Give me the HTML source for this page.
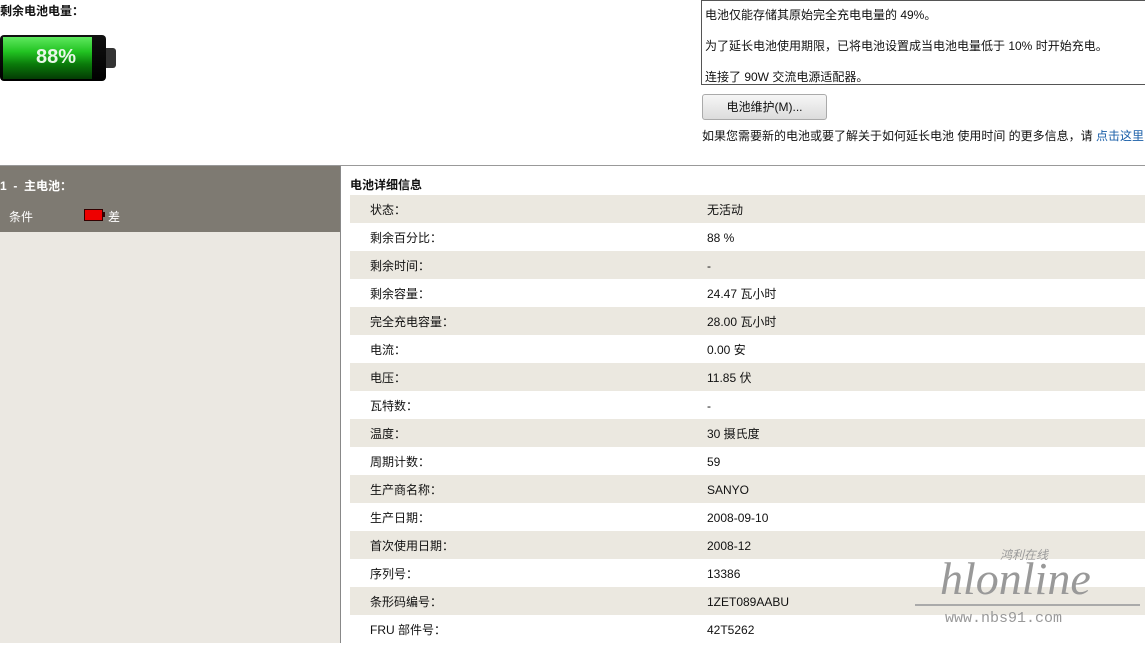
<!DOCTYPE html><html><head><meta charset="utf-8"><style>
body{margin:0;width:1145px;height:643px;overflow:hidden;background:#fff;font-family:"Liberation Sans","Noto Sans CJK SC",sans-serif;font-size:12px;color:#111;position:relative}
.a{position:absolute;white-space:nowrap}
.row{position:absolute;left:350px;width:795px;height:28px;line-height:30px}
.row span{position:absolute}
.s{background:#ebe8e0}
</style></head><body>
<div class="a" style="left:0;top:2px;font-weight:bold">剩余电池电量：</div>
<div class="a" style="left:0;top:35px;width:106px;height:46px;border-radius:4px;background:linear-gradient(#111,#000);"></div>
<div class="a" style="left:3px;top:37px;width:89px;height:42px;background:linear-gradient(#5fe85f 0%,#22c322 35%,#0a7a0a 65%,#043c04 100%)"></div>
<div class="a" style="left:106px;top:48px;width:10px;height:20px;background:#333;border-radius:0 3px 3px 0"></div>
<div class="a" style="left:36px;top:46px;font-size:20px;font-weight:bold;color:#e8f7e8">88%</div>
<div class="a" style="left:701px;top:0;width:444px;height:85px;border:1px solid #555;border-right:none;box-sizing:border-box"></div>
<div class="a" style="left:705px;top:6px">电池仅能存储其原始完全充电电量的 49%。</div>
<div class="a" style="left:705px;top:37px">为了延长电池使用期限，已将电池设置成当电池电量低于 10% 时开始充电。</div>
<div class="a" style="left:705px;top:68px">连接了 90W 交流电源适配器。</div>
<div class="a" style="left:702px;top:94px;width:123px;height:24px;border:1px solid #aaa;border-radius:3px;background:linear-gradient(#f6f6f6,#dcdcdc);text-align:center;line-height:24px">电池维护(M)...</div>
<div class="a" style="left:702px;top:127px">如果您需要新的电池或要了解关于如何延长电池 使用时间 的更多信息，请 <span style="color:#1a5fa8">点击这里</span></div>
<div class="a" style="left:0;top:165px;width:1145px;height:1px;background:#999"></div>
<div class="a" style="left:0;top:166px;width:340px;height:66px;background:#7e7a72"></div>
<div class="a" style="left:0;top:232px;width:340px;height:411px;background:#ebe8e2"></div>
<div class="a" style="left:340px;top:166px;width:1px;height:477px;background:#888"></div>
<div class="a" style="left:0;top:177px;color:#fff;font-weight:bold">1 &nbsp;- &nbsp;主电池：</div>
<div class="a" style="left:9px;top:208px;color:#fff">条件</div>
<div class="a" style="left:84px;top:209px;width:17px;height:10px;background:#e00;border:1px solid #300"></div>
<div class="a" style="left:103px;top:212px;width:2px;height:5px;background:#300"></div>
<div class="a" style="left:108px;top:208px;color:#fff">差</div>
<div class="a" style="left:350px;top:176px;font-weight:bold">电池详细信息</div>
<div class="row s" style="top:195px"><span style="left:20px">状态：</span><span style="left:357px">无活动</span></div>
<div class="row" style="top:223px"><span style="left:20px">剩余百分比：</span><span style="left:357px">88 %</span></div>
<div class="row s" style="top:251px"><span style="left:20px">剩余时间：</span><span style="left:357px">-</span></div>
<div class="row" style="top:279px"><span style="left:20px">剩余容量：</span><span style="left:357px">24.47 瓦小时</span></div>
<div class="row s" style="top:307px"><span style="left:20px">完全充电容量：</span><span style="left:357px">28.00 瓦小时</span></div>
<div class="row" style="top:335px"><span style="left:20px">电流：</span><span style="left:357px">0.00 安</span></div>
<div class="row s" style="top:363px"><span style="left:20px">电压：</span><span style="left:357px">11.85 伏</span></div>
<div class="row" style="top:391px"><span style="left:20px">瓦特数：</span><span style="left:357px">-</span></div>
<div class="row s" style="top:419px"><span style="left:20px">温度：</span><span style="left:357px">30 摄氏度</span></div>
<div class="row" style="top:447px"><span style="left:20px">周期计数：</span><span style="left:357px">59</span></div>
<div class="row s" style="top:475px"><span style="left:20px">生产商名称：</span><span style="left:357px">SANYO</span></div>
<div class="row" style="top:503px"><span style="left:20px">生产日期：</span><span style="left:357px">2008-09-10</span></div>
<div class="row s" style="top:531px"><span style="left:20px">首次使用日期：</span><span style="left:357px">2008-12</span></div>
<div class="row" style="top:559px"><span style="left:20px">序列号：</span><span style="left:357px">13386</span></div>
<div class="row s" style="top:587px"><span style="left:20px">条形码编号：</span><span style="left:357px">1ZET089AABU</span></div>
<div class="row" style="top:615px"><span style="left:20px">FRU 部件号：</span><span style="left:357px">42T5262</span></div>
<div class="a" style="left:940px;top:552px;font-family:'Liberation Serif',serif;font-style:italic;font-size:46px;color:#999">hlonline</div>
<div class="a" style="left:1000px;top:546px;font-size:12px;color:#999;font-style:italic">鸿利在线</div>
<div class="a" style="left:915px;top:604px;width:225px;height:2px;background:#aaa"></div>
<div class="a" style="left:945px;top:610px;font-family:'Liberation Mono',monospace;font-size:15px;color:#999">www.nbs91.com</div>
</body></html>
